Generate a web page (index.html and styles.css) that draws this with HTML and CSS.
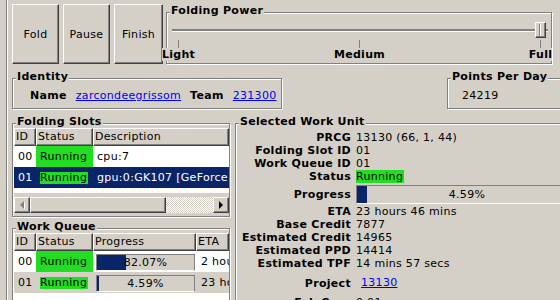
FILE: index.html
```html
<!DOCTYPE html>
<html>
<head>
<meta charset="utf-8">
<title>FAHControl</title>
<link rel="stylesheet" href="styles.css">
</head>
<body>
<div class="app">
  <div class="top">
    <div class="buttons">
      <button class="btn">Fold</button>
      <button class="btn">Pause</button>
      <button class="btn btn-wide">Finish</button>
    </div>
    <section class="frame power">
      <h2 class="frame-title">Folding Power</h2>
      <div class="slider">
        <div class="groove"></div>
        <div class="handle"></div>
      </div>
      <div class="scale">
        <div class="mark"><i class="tick"></i><span>Light</span></div>
        <div class="mark"><i class="tick"></i><span>Medium</span></div>
        <div class="mark"><i class="tick"></i><span>Full</span></div>
      </div>
    </section>
  </div>

  <div class="mid">
    <section class="frame identity">
      <h2 class="frame-title">Identity</h2>
      <div class="id-row">
        <b>Name</b><a href="#">zarcondeegrissom</a><b>Team</b><a href="#">231300</a>
      </div>
    </section>
    <section class="frame ppd">
      <h2 class="frame-title">Points Per Day</h2>
      <div class="ppd-value">24219</div>
    </section>
  </div>

  <div class="bottom">
    <div class="left-col">
      <section class="frame slots">
        <h2 class="frame-title">Folding Slots</h2>
        <div class="tree">
          <div class="thead cols-slots">
            <div class="th">ID</div><div class="th">Status</div><div class="th">Description</div>
          </div>
          <div class="tbody slots-body">
            <div class="tr cols-slots">
              <div class="td">00</div><div class="td green">Running</div><div class="td">cpu:7</div>
            </div>
            <div class="tr cols-slots selected">
              <div class="td">01</div><div class="td"><span class="tag">Running</span></div><div class="td">gpu:0:GK107 [GeForce GT 640]</div>
            </div>
          </div>
          <div class="hscroll">
            <div class="arrow"><i class="tri-left"></i></div>
            <div class="thumb"></div>
            <div class="trough"></div>
            <div class="arrow"><i class="tri-right"></i></div>
          </div>
        </div>
      </section>

      <section class="frame queue">
        <h2 class="frame-title">Work Queue</h2>
        <div class="tree">
          <div class="thead cols-queue">
            <div class="th">ID</div><div class="th">Status</div><div class="th">Progress</div><div class="th">ETA</div>
          </div>
          <div class="tbody queue-body">
            <div class="tr cols-queue">
              <div class="td">00</div><div class="td green">Running</div>
              <div class="td pcell"><div class="pbar"><div class="pfill" style="width:29px"></div><div class="ptext">82.07%</div></div></div>
              <div class="td eta">2 hours 3 mins</div>
            </div>
            <div class="tr cols-queue unfocused">
              <div class="td">01</div><div class="td"><span class="tag">Running</span></div>
              <div class="td pcell"><div class="pbar"><div class="pfill" style="width:2px"></div><div class="ptext">4.59%</div></div></div>
              <div class="td eta">23 hours 46 mins</div>
            </div>
          </div>
        </div>
      </section>
    </div>

    <section class="frame swu">
      <h2 class="frame-title">Selected Work Unit</h2>
      <div class="kv">
        <div class="k">PRCG</div><div class="v">13130 (66, 1, 44)</div>
        <div class="k">Folding Slot ID</div><div class="v">01</div>
        <div class="k">Work Queue ID</div><div class="v">01</div>
        <div class="k">Status</div><div class="v"><span class="tag">Running</span></div>
        <div class="k">Progress</div><div class="v"><div class="pbar wide"><div class="pfill" style="width:10px"></div><div class="ptext">4.59%</div></div></div>
        <div class="k">ETA</div><div class="v">23 hours 46 mins</div>
        <div class="k">Base Credit</div><div class="v">7877</div>
        <div class="k">Estimated Credit</div><div class="v">14965</div>
        <div class="k">Estimated PPD</div><div class="v">14414</div>
        <div class="k">Estimated TPF</div><div class="v">14 mins 57 secs</div>
        <div class="k">Project</div><div class="v link-v"><a href="#">13130</a></div>
        <div class="k">Fah Core</div><div class="v">0.01</div>
      </div>
    </section>
  </div>
</div>
</body>
</html>
```

FILE: styles.css
```css
* { box-sizing: border-box; }
html, body { margin: 0; padding: 0; }
body {
  background: #d4d0c8;
  font-family: "DejaVu Sans", sans-serif;
  font-size: 11px;
  line-height: 13px;
  letter-spacing: 0.3px;
  color: #000;
  width: 560px;
  height: 300px;
  overflow: hidden;
}
a { color: #0000ee; text-decoration: underline; }
b { font-weight: bold; }

.app {
  margin-left: 6px;
  width: 640px;
  height: 300px;
  border-left: 1px solid #808080;
  box-shadow: inset 1px 0 0 #fff;
  padding-left: 5px;
}

/* raised widget look */
.btn, .handle, .th, .arrow, .thumb {
  background: #d4d0c8;
  border: 1px solid;
  border-color: #fff #404040 #404040 #fff;
  box-shadow: inset -1px -1px 0 #808080;
}

.top { display: flex; align-items: flex-start; height: 65px; }
.buttons { display: flex; gap: 4px; margin-top: 4px; }
.btn {
  width: 47px;
  height: 60px;
  padding: 0;
  margin: 0;
  font: inherit;
  letter-spacing: inherit;
  color: #000;
}
.btn-wide { width: 49px; }

.frame {
  position: relative;
  border: 1px solid #808080;
  box-shadow: inset 1px 1px 0 #fff, 1px 1px 0 #fff;
}
.frame-title {
  position: absolute;
  top: -9px;
  left: 3px;
  margin: 0;
  padding: 0 1px;
  font-size: 11px;
  font-weight: bold;
  line-height: 13px;
  background: #d4d0c8;
  white-space: nowrap;
}

.power { margin: 12px 0 0 3px; width: 386px; height: 52px; }
.slider { position: relative; height: 16px; margin: 9px 3px 0 5px; }
.groove {
  position: absolute;
  left: 0; right: 0; top: 7px;
  height: 3px;
  border-top: 2px solid #808080;
  border-bottom: 1px solid #fff;
}
.handle {
  position: absolute;
  right: 2px; top: 0;
  width: 11px; height: 16px;
}
.handle::after {
  content: "";
  position: absolute;
  left: 3px; top: 1px; bottom: 1px;
  width: 1px;
  background: #808080;
  box-shadow: 1px 0 0 #fff;
}
.scale {
  display: flex;
  justify-content: space-between;
  margin: 2px 10px 0 11px;
}
.mark { width: 1px; display: flex; flex-direction: column; align-items: center; }
.tick { display: block; width: 1px; height: 8px; background: #808080; }
.mark span { font-weight: bold; white-space: nowrap; background: #d4d0c8; }

.mid { display: flex; align-items: flex-start; height: 45px; }
.identity { margin-top: 13px; width: 270px; height: 31px; }
.id-row { display: flex; gap: 9px; padding: 10px 0 0 17px; white-space: nowrap; }
.ppd { margin: 13px 0 0 165px; width: 130px; height: 31px; }
.ppd-value { padding: 10px 0 0 14px; }

.bottom { display: flex; align-items: flex-start; gap: 5px; }
.left-col { width: 218px; flex: none; display: flex; flex-direction: column; }
.slots { margin-top: 13px; height: 94px; }
.queue { margin-top: 11px; height: 100px; }
.swu { margin-top: 13px; flex: 1; height: 200px; }

.tree { margin: 4px 0 0 1px; }
.cols-slots { display: grid; grid-template-columns: 22px 57px 1fr; }
.cols-queue { display: grid; grid-template-columns: 22px 57px 103px 1fr; }
.th {
  height: 18px;
  padding: 1px 0 0 1px;
  white-space: nowrap;
  overflow: hidden;
}
.tbody { background: #fff; overflow: hidden; }
.slots-body { height: 47px; }
.queue-body { height: 60px; }
.tr { height: 21px; }
.td {
  padding-left: 4px;
  line-height: 21px;
  white-space: nowrap;
  overflow: hidden;
}
.td.green { background: #22dd22; }
.tr.selected { background: #0a246a; color: #fff; }
.tr.unfocused { background: #d4d0c8; }
.tag {
  display: inline-block;
  background: #22dd22;
  color: #000;
  line-height: 12px;
  padding-right: 1px;
}
.v .tag { line-height: 13px; }

.hscroll { display: flex; height: 16px; margin-top: 4px; }
.arrow {
  width: 16px;
  height: 16px;
  flex: none;
  display: flex;
  align-items: center;
  justify-content: center;
}
.tri-left {
  width: 0; height: 0;
  border-top: 4px solid transparent;
  border-bottom: 4px solid transparent;
  border-right: 4px solid #808080;
  filter: drop-shadow(1px 1px 0 #fff);
}
.tri-right {
  width: 0; height: 0;
  border-top: 4px solid transparent;
  border-bottom: 4px solid transparent;
  border-left: 4px solid #000;
}
.thumb { width: 136px; height: 16px; flex: none; }
.trough {
  flex: 1;
  background-color: #fff;
  background-image: repeating-conic-gradient(#d4d0c8 0 25%, #fff 0 50%);
  background-size: 2px 2px;
}

.td.pcell { padding: 0; }
.pbar {
  position: relative;
  margin: 3px 0 0 3px;
  width: 99px;
  height: 17px;
  background: #d4d0c8;
  border: 1px solid;
  border-color: #808080 #808080 #fff #808080;
}
.pfill { position: absolute; left: 0; top: 0; bottom: 0; background: #0a246a; }
.ptext { position: relative; text-align: center; line-height: 15px; color: #000; }
.td.eta { padding-left: 5px; }

.kv {
  display: grid;
  grid-template-columns: 115px 1fr;
  column-gap: 5px;
  align-items: center;
  padding-top: 7px;
}
.k { font-weight: bold; text-align: right; white-space: nowrap; }
.v { white-space: nowrap; }
.pbar.wide { width: 222px; height: 19px; margin: 2px 0 1px 0; }
.pbar.wide .ptext { line-height: 17px; }
.link-v { padding: 6px 0 7px 5px; }
```
